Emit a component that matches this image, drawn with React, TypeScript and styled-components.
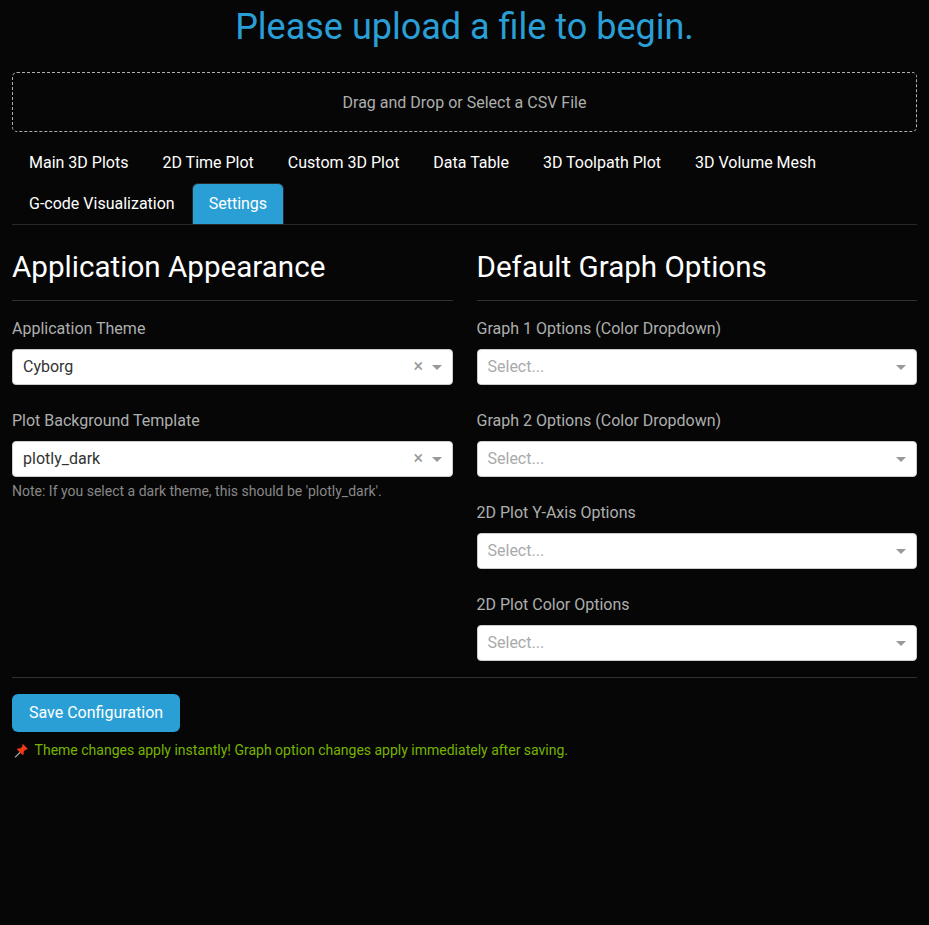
import React from 'react';
import styled, { createGlobalStyle } from 'styled-components';

const Global = createGlobalStyle`
  *, *::before, *::after { box-sizing: border-box; }
  body {
    margin: 0;
    min-height: 100vh;
    background: #060606;
    color: #adafae;
    font: 400 16px/1.5 Roboto, sans-serif;
  }
`;

const Page = styled.main`
  padding: 0 12px;
`;

const Title = styled.h1`
  margin: 0;
  padding-top: 6px;
  font-size: 36px;
  font-weight: 400;
  line-height: 43px;
  text-align: center;
  color: #2a9fd6;
`;

const Upload = styled.div`
  height: 60px;
  margin: 23px 0 10px;
  border: 1px dashed #adafae;
  border-radius: 5px;
  line-height: 60px;
  text-align: center;
`;

const Tabs = styled.nav`
  display: flex;
  flex-wrap: wrap;
  border-bottom: 1px solid #282828;
`;

const Tab = styled.button<{ $active?: boolean }>`
  height: 42px;
  margin-bottom: -1px;
  padding: 8px 16px;
  border: 1px solid ${(p) => (p.$active ? '#282828' : 'transparent')};
  border-radius: 6px 6px 0 0;
  background: ${(p) => (p.$active ? '#2a9fd6' : 'none')};
  color: #fff;
  font: inherit;
`;

const Columns = styled.div`
  display: grid;
  grid-template-columns: 1fr 1fr;
  column-gap: 24px;
  padding-top: 24px;
`;

const Heading = styled.h3`
  margin: 0 0 -1px;
  font-size: 29.6px;
  font-weight: 400;
  line-height: 36px;
  color: #fff;
`;

const Rule = styled.hr`
  margin: 16px 0;
  border: 0;
  border-top: 1px solid #303131;
`;

const Field = styled.div`
  margin-bottom: 24px;

  &:last-child {
    margin-bottom: 0;
  }
`;

const Label = styled.label`
  display: block;
  margin-bottom: 8px;
`;

const Select = styled.div<{ $empty?: boolean }>`
  display: flex;
  align-items: center;
  height: 36px;
  padding: 0 10px;
  border: 1px solid #ccc;
  border-radius: 4px;
  background: #fff;
  color: ${(p) => (p.$empty ? '#aaa' : '#333')};
`;

const Value = styled.span`
  flex: 1;
`;

const Clear = styled.span`
  margin-right: 8.5px;
  padding-bottom: 2px;
  font-size: 18px;
  line-height: 1;
  color: #999;
`;

const Caret = styled.span`
  border: 5px solid transparent;
  border-top-color: #999;
  border-bottom-width: 0;
`;

const Note = styled.small`
  display: block;
  margin-top: 4px;
  font-size: 14px;
  line-height: 21px;
  color: #888;
`;

const Save = styled.button`
  display: block;
  height: 38px;
  padding: 0 17px;
  border: 0;
  border-radius: 6px;
  background: #2a9fd6;
  color: #fff;
  font: inherit;
`;

const Status = styled.div`
  display: flex;
  align-items: center;
  gap: 4.6px;
  margin-top: 8px;
  padding-left: 2px;
  font-size: 14px;
  line-height: 21px;
  color: #77b300;
`;

const Pin = () => (
  <svg width="16" height="16" viewBox="0 0 16 16" aria-hidden="true">
    <path d="M1 14.4 6.2 9.2" stroke="#a3a3a3" strokeWidth="1.3" />
    <path d="M8.2 1.6 9.2 1.2 13.5 5.5 13.1 6.5 11.6 6.7 9.8 8.6 9.6 11.4 8.6 12.1 3 6.5 3.7 5.5 6.5 5.3 8.4 3.4Z" fill="#f03a17" />
  </svg>
);

type DropdownProps = { label: string; value?: string; note?: string };

const Dropdown = ({ label, value, note }: DropdownProps) => (
  <Field>
    <Label>{label}</Label>
    <Select $empty={!value}>
      <Value>{value ?? 'Select...'}</Value>
      {value && <Clear>×</Clear>}
      <Caret />
    </Select>
    {note && <Note>{note}</Note>}
  </Field>
);

const tabs = ['Main 3D Plots', '2D Time Plot', 'Custom 3D Plot', 'Data Table', '3D Toolpath Plot', '3D Volume Mesh', 'G-code Visualization', 'Settings'];
const graphOptions = ['Graph 1 Options (Color Dropdown)', 'Graph 2 Options (Color Dropdown)', '2D Plot Y-Axis Options', '2D Plot Color Options'];

export default function App() {
  return (
    <Page>
      <Global />
      <Title>Please upload a file to begin.</Title>
      <Upload>Drag and Drop or Select a CSV File</Upload>
      <Tabs>
        {tabs.map((t) => <Tab key={t} $active={t === 'Settings'}>{t}</Tab>)}
      </Tabs>
      <Columns>
        <section>
          <Heading>Application Appearance</Heading>
          <Rule />
          <Dropdown label="Application Theme" value="Cyborg" />
          <Dropdown label="Plot Background Template" value="plotly_dark" note="Note: If you select a dark theme, this should be 'plotly_dark'." />
        </section>
        <section>
          <Heading>Default Graph Options</Heading>
          <Rule />
          {graphOptions.map((label) => <Dropdown key={label} label={label} />)}
        </section>
      </Columns>
      <footer>
        <Rule />
        <Save>Save Configuration</Save>
        <Status><Pin />Theme changes apply instantly! Graph option changes apply immediately after saving.</Status>
      </footer>
    </Page>
  );
}
